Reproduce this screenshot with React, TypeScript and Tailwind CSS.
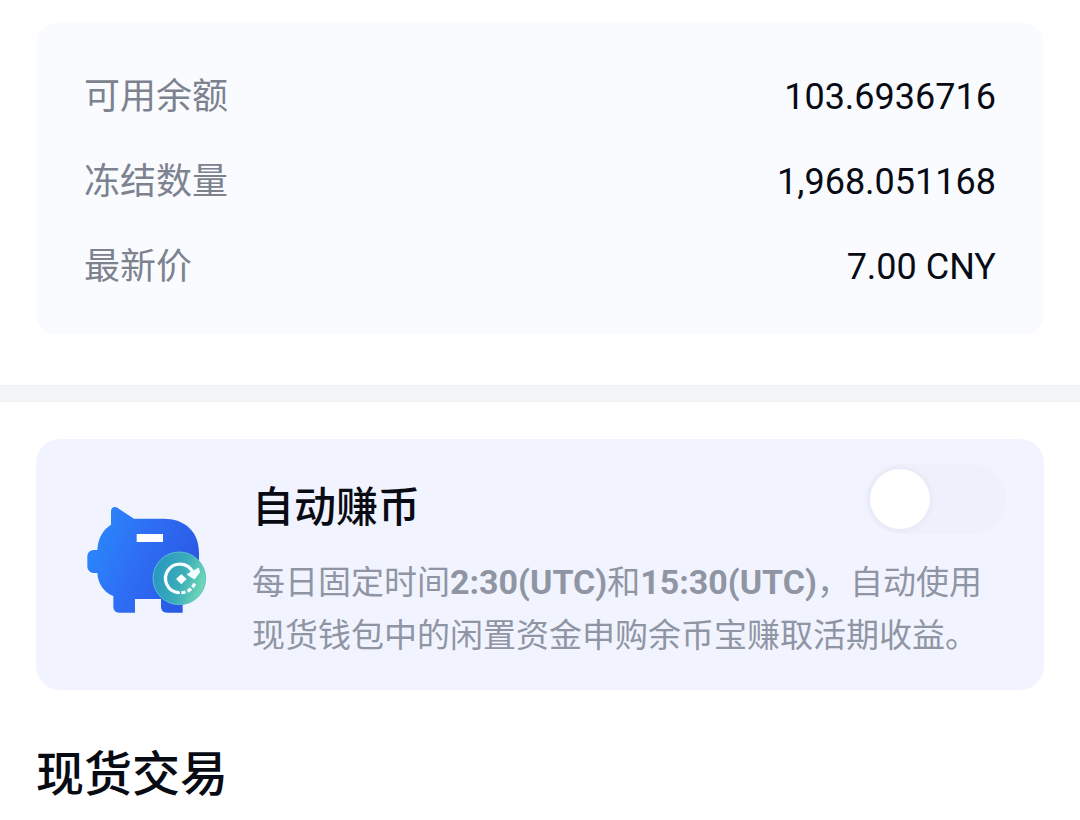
import { useState } from 'react'

interface BalanceRow {
  label: string
  value: string
}

const BALANCE: BalanceRow[] = [
  { label: '可用余额', value: '103.6936716' },
  { label: '冻结数量', value: '1,968.051168' },
  { label: '最新价', value: '7.00 CNY' },
]

function PiggyIcon() {
  return (
    <svg className="w-32 h-[116px] flex-shrink-0" viewBox="42 42 384 348" aria-hidden="true">
      <defs>
        <linearGradient id="pig" x1="0" y1="0.1" x2="1" y2="0.5">
          <stop offset="0" stopColor="#2a8cfb" />
          <stop offset="0.5" stopColor="#2e6ff5" />
          <stop offset="1" stopColor="#2b59e4" />
        </linearGradient>
        <linearGradient id="coin" x1="0" y1="0.3" x2="1" y2="0.6">
          <stop offset="0" stopColor="#2796c0" />
          <stop offset="0.55" stopColor="#3aadb9" />
          <stop offset="1" stopColor="#74dbb4" />
        </linearGradient>
      </defs>
      <path
        d="M123 101V62C123 49 133 44 143 51L192 83H280C345 83 387 122 387 185V290C387 305 350 325 338 330V365H292C279 365 273 358 273 346V324H195V365H148C136 365 130 358 130 346V315C102 304 84 279 82 246H74C60 246 52 238 52 225V197C52 184 60 177 74 177H82C84 142 98 117 123 101Z"
        fill="url(#pig)"
      />
      <rect x="200" y="129" width="79" height="24" fill="#fff" />
      <circle cx="328" cy="262" r="79" fill="url(#coin)" stroke="#5cbfd0" strokeWidth="3" />
      <g fill="none" stroke="#f4fdff" strokeWidth="10">
        <path d="M325 305A43 43 0 1 1 368 243" strokeLinecap="round" />
        <path d="M334 305A43 43 0 0 0 375 274" strokeDasharray="13 6" />
      </g>
      <path d="M353 250L385 233L388 243L373 263Z" fill="#f4fdff" stroke="#f4fdff" strokeWidth="4" strokeLinejoin="round" />
      <path d="M334 252L347 264L334 277L321 264Z" fill="#fff" stroke="#fff" strokeWidth="4" strokeLinejoin="round" />
    </svg>
  )
}

export default function App() {
  const [autoEarn, setAutoEarn] = useState(false)

  return (
    <main
      lang="zh-CN"
      className="min-h-screen bg-white pt-[23px] text-[#090b14] font-['Roboto','Noto_Sans_CJK_SC',sans-serif]"
    >
      {/* Balance */}
      <dl className="mx-9 flex flex-col gap-[35px] rounded-[20px] bg-[#f9fbff] px-12 pt-[49px] pb-[43px] text-[36px] leading-[50px]">
        {BALANCE.map((row) => (
          <div key={row.label} className="flex items-center justify-between">
            <dt className="text-[#7d828f]">{row.label}</dt>
            <dd>{row.value}</dd>
          </div>
        ))}
      </dl>

      <div className="mt-[50px] h-[17px] border-y border-[#eeeff2] bg-[#f4f5f8]" />

      {/* Auto earn */}
      <section className="mx-9 mt-[37px] flex items-center gap-10 rounded-3xl bg-[#f1f4ff] pt-[25px] pr-[38px] pb-7 pl-12">
        <PiggyIcon />
        <div className="min-w-0 flex-1">
          <div className="flex items-end justify-between">
            <label htmlFor="auto-earn" className="text-[42px] leading-[52px] font-medium">
              自动赚币
            </label>
            <input
              id="auto-earn"
              type="checkbox"
              role="switch"
              checked={autoEarn}
              onChange={(e) => setAutoEarn(e.target.checked)}
              className="flex h-[70px] w-[140px] appearance-none items-center rounded-full bg-[#eef0fb] px-1 before:size-[60px] before:rounded-full before:bg-white before:shadow-[0_0_6px_rgba(60,50,90,0.08)] checked:justify-end checked:bg-[#2e6ff5]"
            />
          </div>
          <p className="mt-[22px] pr-5 text-[33px] leading-[53px] text-[#9095a3]">
            每日固定时间<b className="text-[34px]">2:30(UTC)</b>和<b className="text-[34px]">15:30(UTC)</b>
            ，自动使用现货钱包中的闲置资金申购余币宝赚取活期收益。
          </p>
        </div>
      </section>

      {/* Spot trading */}
      <h2 className="mx-9 mt-[53px] text-[48px] leading-[64px] font-medium">现货交易</h2>
    </main>
  )
}
